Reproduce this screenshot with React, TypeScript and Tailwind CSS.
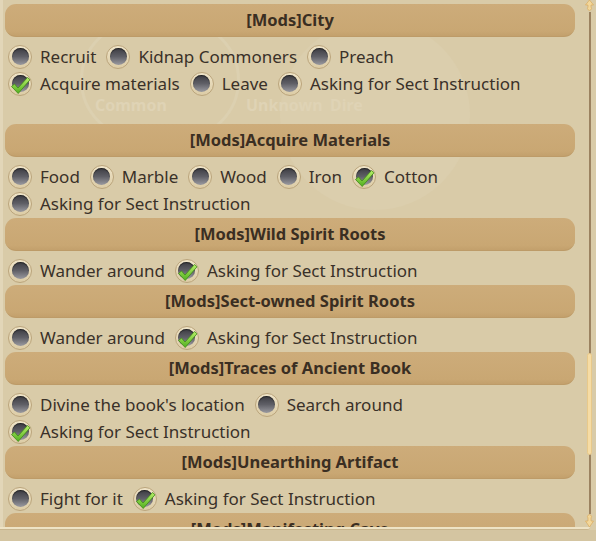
import React from "react";

type Opt = { label: string; checked?: boolean };
type Section = { title: string; rows: Opt[][]; extra?: boolean };

const sections: Section[] = [
  {
    title: "[Mods]City",
    rows: [
      [{ label: "Recruit" }, { label: "Kidnap Commoners" }, { label: "Preach" }],
      [
        { label: "Acquire materials", checked: true },
        { label: "Leave" },
        { label: "Asking for Sect Instruction" },
      ],
    ],
    extra: true,
  },
  {
    title: "[Mods]Acquire Materials",
    rows: [
      [
        { label: "Food" },
        { label: "Marble" },
        { label: "Wood" },
        { label: "Iron" },
        { label: "Cotton", checked: true },
      ],
      [{ label: "Asking for Sect Instruction" }],
    ],
  },
  {
    title: "[Mods]Wild Spirit Roots",
    rows: [[{ label: "Wander around" }, { label: "Asking for Sect Instruction", checked: true }]],
  },
  {
    title: "[Mods]Sect-owned Spirit Roots",
    rows: [[{ label: "Wander around" }, { label: "Asking for Sect Instruction", checked: true }]],
  },
  {
    title: "[Mods]Traces of Ancient Book",
    rows: [
      [{ label: "Divine the book's location" }, { label: "Search around" }],
      [{ label: "Asking for Sect Instruction", checked: true }],
    ],
  },
  {
    title: "[Mods]Unearthing Artifact",
    rows: [[{ label: "Fight for it" }, { label: "Asking for Sect Instruction", checked: true }]],
  },
  {
    title: "[Mods]Manifesting Cave",
    rows: [],
  },
];

function Radio({ checked }: { checked?: boolean }) {
  return (
    <div className="relative w-[24px] h-[24px] shrink-0 rounded-full bg-[linear-gradient(180deg,#efe4c8_0%,#dccca6_100%)] border border-[#bba57c] flex items-center justify-center">
      <div className="w-[17px] h-[17px] rounded-full bg-[linear-gradient(180deg,#3c3c42_0%,#5f5f66_50%,#9a9aa0_100%)] shadow-[inset_0_1px_1px_rgba(0,0,0,0.5)]" />
      {checked && (
        <svg className="absolute left-[1px] top-[3px]" width="21" height="19" viewBox="0 0 21 19">
          <defs>
            <linearGradient id="chk" x1="0" y1="0" x2="0" y2="1">
              <stop offset="0" stopColor="#b9f06a" />
              <stop offset="1" stopColor="#4fae1e" />
            </linearGradient>
          </defs>
          <path
            d="M1.5 10.5 L4.5 8 L8 12 L17.5 1.5 L20 3.8 L8.2 17.5 Z"
            fill="url(#chk)"
            stroke="#3f8a16"
            strokeWidth="0.8"
            strokeLinejoin="round"
          />
        </svg>
      )}
    </div>
  );
}

function Row({ opts }: { opts: Opt[] }) {
  return (
    <div className="h-[27px] flex items-center pl-[3px] gap-[10px]">
      {opts.map((o, i) => (
        <div key={i} className="flex items-center gap-[8px]">
          <Radio checked={o.checked} />
          <span className="text-[17px] leading-none text-[#3a3129] whitespace-nowrap">{o.label}</span>
        </div>
      ))}
    </div>
  );
}

function Header({ title }: { title: string }) {
  return (
    <div className="h-[33px] w-[570px] rounded-[11px] bg-[linear-gradient(180deg,#cdac7a_0%,#c9a773_85%,#c3a06c_100%)] border-b border-[#bd9b68] flex items-center justify-center">
      <span className="text-[16.5px] font-bold text-[#3a2e22] leading-none">{title}</span>
    </div>
  );
}

export default function App() {
  return (
    <div
      className="relative w-[596px] h-[541px] overflow-hidden bg-[#d9cba8]"
      style={{ fontFamily: '"Noto Sans", "Open Sans", sans-serif' }}
    >
      {/* faint watermark background */}
      <div className="absolute left-[280px] top-[20px] w-[190px] h-[190px] rounded-full bg-[#dbcead]" />
      <div className="absolute left-[80px] top-[20px] w-[160px] h-[120px] rounded-full border-[3px] border-[#dcd0b0]" />
      <div className="absolute left-[95px] top-[93px] text-[16px] font-bold text-[#dfd3b5]">Common</div>
      <div className="absolute left-[246px] top-[93px] text-[16px] font-bold text-[#dfd3b5]">Unknown</div>
      <div className="absolute left-[330px] top-[93px] text-[16px] font-bold text-[#dfd3b5]">Dire</div>
      <div className="absolute left-[0px] top-[0px] w-[3px] h-[527px] bg-[#e2d6b8]" />

      <div className="relative flex h-[527px] overflow-hidden">
        <div className="w-[583px] h-[527px] overflow-hidden pl-[5px] pt-[4px]">
          {sections.map((s, i) => (
            <div key={i} className={s.extra ? "mb-[26px]" : ""}>
              <Header title={s.title} />
              <div className="pt-[6px] pb-[1px]">
                {s.rows.map((r, j) => (
                  <Row key={j} opts={r} />
                ))}
              </div>
            </div>
          ))}
        </div>

        {/* scrollbar */}
        <div className="relative w-[13px] h-[527px] flex flex-col items-center">
          <svg width="9" height="12" viewBox="0 0 9 12" className="shrink-0">
            <path d="M4.5 0 L8.5 5 L6 5 L6 7 A2 2 0 1 1 3 7 L3 5 L0.5 5 Z" fill="#f3d79a" stroke="#d9a654" strokeWidth="0.6" />
          </svg>
          <div className="relative flex-1 w-[5px] flex justify-center">
            <div className="w-[2px] h-full bg-[#9b8260]" />
            <div className="absolute left-0 top-[341px] w-[5px] h-[102px] rounded-full bg-[#f6dca4] border border-[#e8c98a]" />
          </div>
          <svg width="9" height="13" viewBox="0 0 9 13" className="shrink-0">
            <path d="M4.5 13 L8.5 7 L6 7 L6 4 A2 2 0 1 0 3 4 L3 7 L0.5 7 Z" fill="#f3d79a" stroke="#d9a654" strokeWidth="0.6" />
          </svg>
        </div>
      </div>

      {/* bottom frame */}
      <div className="relative w-[590px] h-[3px] bg-[#eee3c5] rounded-br-[6px] border-b border-[#c8b58e]" />
      <div className="relative h-[11px] bg-[#d4c5a1]" />
    </div>
  );
}
